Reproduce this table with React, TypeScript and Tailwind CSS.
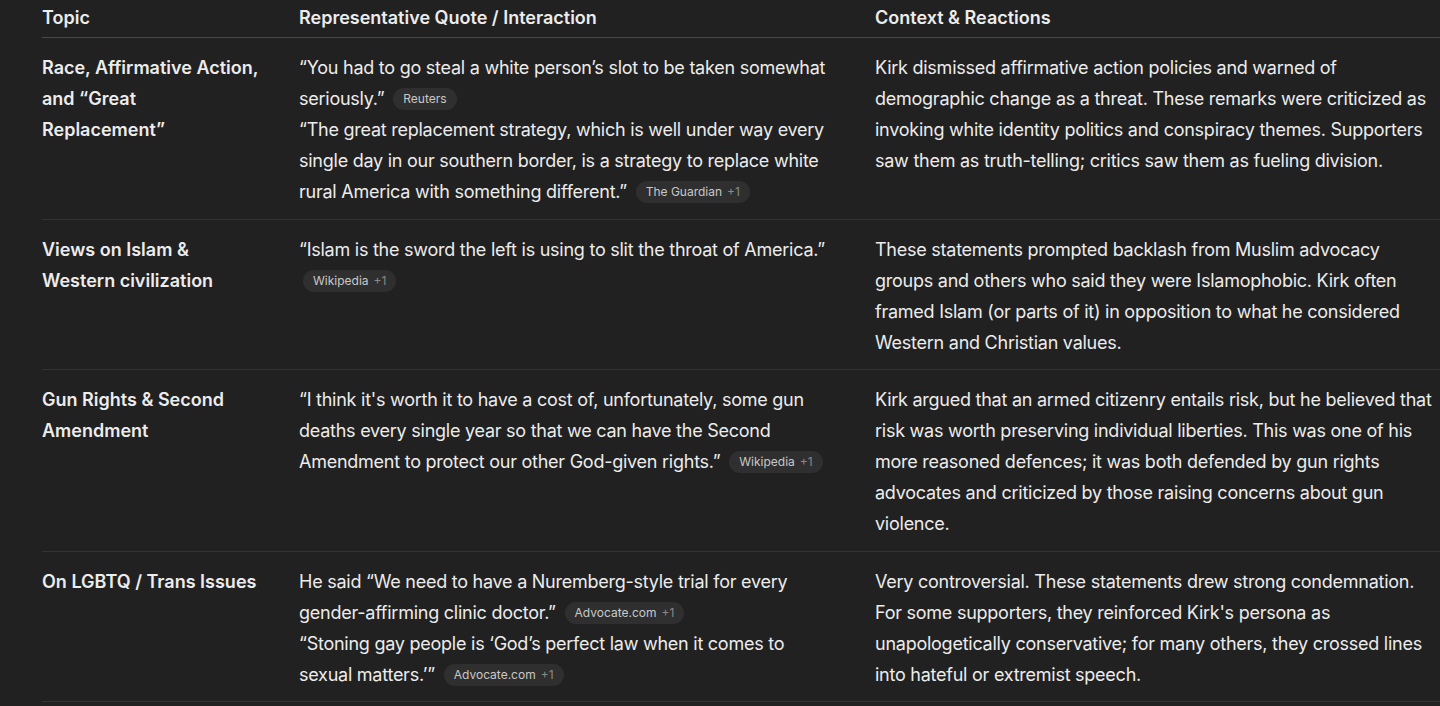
import React from "react";

type Src = { name: string; plus?: boolean };

function Pill({ s }: { s: Src }) {
  return (
    <span className="ml-[4px] inline-flex h-[22px] translate-y-[-1px] items-center rounded-full bg-[#2f2f2f] px-[10px] align-middle text-[12px] leading-none tracking-normal text-[#c8c8c8]">
      {s.name}
      {s.plus && <span className="ml-[5px] text-[#8a8a8a]">+1</span>}
    </span>
  );
}

type Row = {
  topic: string;
  quotes: { text: string; src: Src }[];
  context: string;
};

const rows: Row[] = [
  {
    topic: "Race, Affirmative Action, and \u201cGreat Replacement\u201d",
    quotes: [
      {
        text: "\u201cYou had to go steal a white person\u2019s slot to be taken somewhat seriously.\u201d",
        src: { name: "Reuters" },
      },
      {
        text: "\u201cThe great replacement strategy, which is well under way every single day in our southern border, is a strategy to replace white rural America with something different.\u201d",
        src: { name: "The Guardian", plus: true },
      },
    ],
    context:
      "Kirk dismissed affirmative action policies and warned of demographic change as a threat. These remarks were criticized as invoking white identity politics and conspiracy themes. Supporters saw them as truth-telling; critics saw them as fueling division.",
  },
  {
    topic: "Views on Islam & Western civilization",
    quotes: [
      {
        text: "\u201cIslam is the sword the left is using to slit the throat of America.\u201d",
        src: { name: "Wikipedia", plus: true },
      },
    ],
    context:
      "These statements prompted backlash from Muslim advocacy groups and others who said they were Islamophobic. Kirk often framed Islam (or parts of it) in opposition to what he considered Western and Christian values.",
  },
  {
    topic: "Gun Rights & Second Amendment",
    quotes: [
      {
        text: "\u201cI think it's worth it to have a cost of, unfortunately, some gun deaths every single year so that we can have the Second Amendment to protect our other God-given rights.\u201d",
        src: { name: "Wikipedia", plus: true },
      },
    ],
    context:
      "Kirk argued that an armed citizenry entails risk, but he believed that risk was worth preserving individual liberties. This was one of his more reasoned defences; it was both defended by gun rights advocates and criticized by those raising concerns about gun violence.",
  },
  {
    topic: "On LGBTQ / Trans Issues",
    quotes: [
      {
        text: "He said \u201cWe need to have a Nuremberg-style trial for every gender-affirming clinic doctor.\u201d",
        src: { name: "Advocate.com", plus: true },
      },
      {
        text: "\u201cStoning gay people is \u2018God\u2019s perfect law when it comes to sexual matters.\u2019\u201d",
        src: { name: "Advocate.com", plus: true },
      },
    ],
    context:
      "Very controversial. These statements drew strong condemnation. For some supporters, they reinforced Kirk's persona as unapologetically conservative; for many others, they crossed lines into hateful or extremist speech.",
  },
];

export default function App() {
  return (
    <div
      className="h-[706px] w-[1440px] overflow-hidden bg-[#212121] text-[18px] leading-[31px] text-[#ececec]"
      style={{ fontFamily: "Inter, 'Noto Sans', sans-serif" }}
    >
      <div className="ml-[42px] w-[1420px]">
        <div className="grid grid-cols-[257px_576px_1fr] border-b border-[#484848] pt-[2px] pb-[4px] font-semibold">
          <div>Topic</div>
          <div>Representative Quote / Interaction</div>
          <div>Context &amp; Reactions</div>
        </div>
        {rows.map((r, i) => (
          <div
            key={i}
            className="grid grid-cols-[257px_576px_1fr] border-b border-[#333333] pt-[14px] pb-[11.5px]"
          >
            <div className="pr-[37px] font-semibold">{r.topic}</div>
            <div className="pr-[38px] tracking-[-0.25px]">
              {r.quotes.map((q, j) => (
                <div key={j}>
                  {q.text} <Pill s={q.src} />
                </div>
              ))}
            </div>
            <div className="w-[566px] tracking-[-0.25px]">{r.context}</div>
          </div>
        ))}
      </div>
    </div>
  );
}
